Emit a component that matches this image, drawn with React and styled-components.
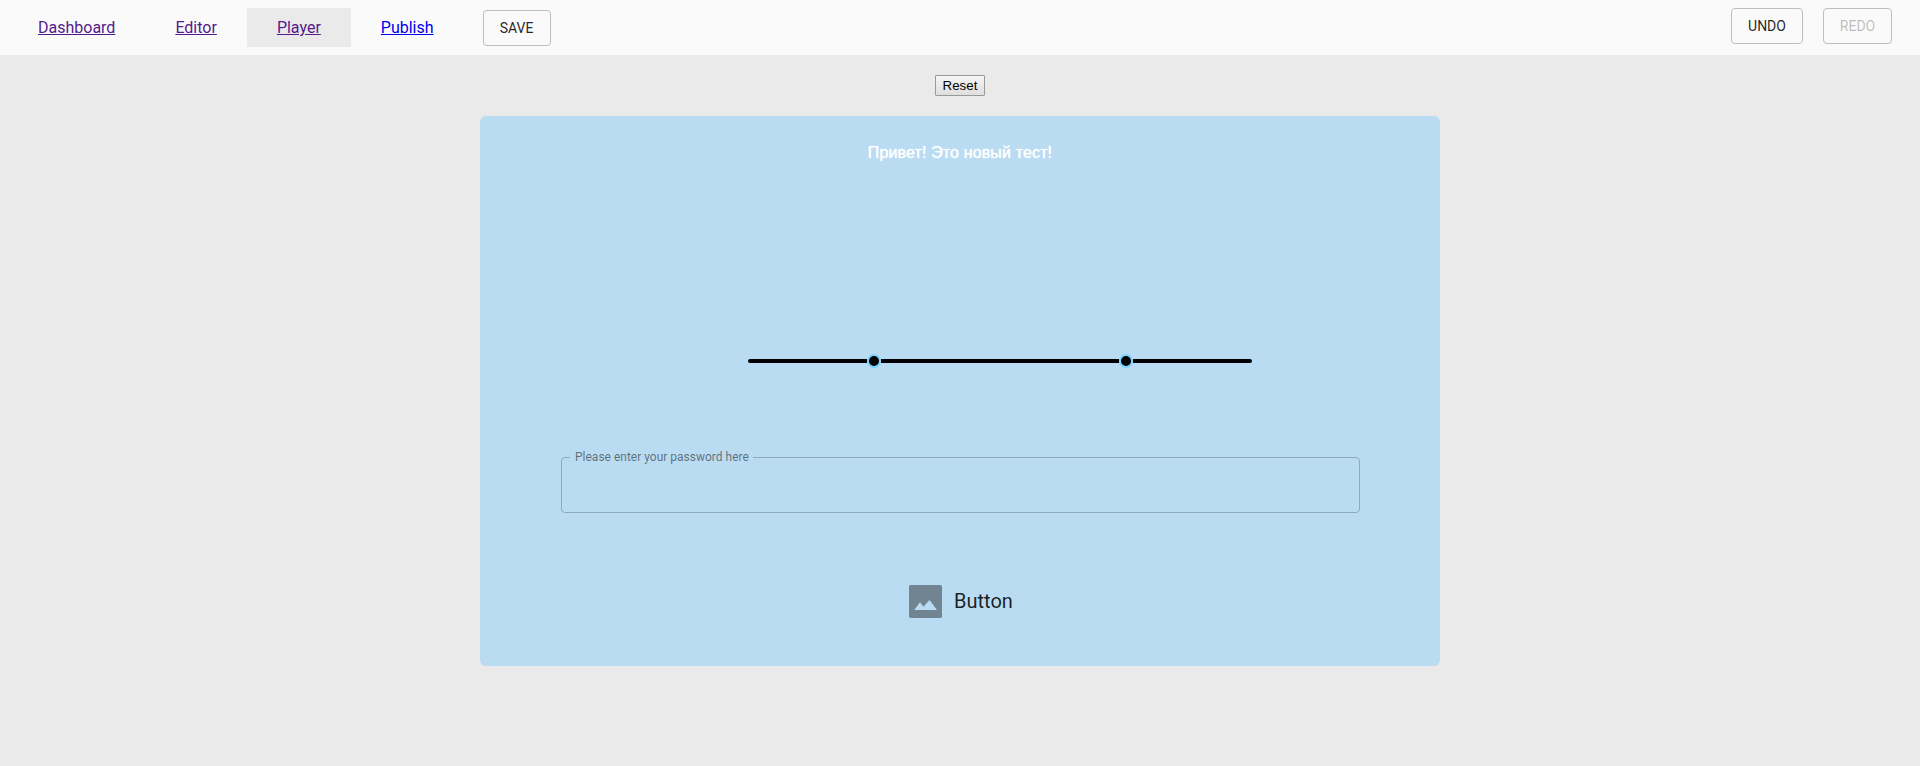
import React from 'react';
import styled, { createGlobalStyle } from 'styled-components';

const GlobalStyle = createGlobalStyle`
  *, *::before, *::after { box-sizing: border-box; }
  body {
    margin: 0;
    background: #eaeaea;
    font-family: Roboto, sans-serif;
    color: rgba(0, 0, 0, 0.87);
  }
`;

const Page = styled.div`
  display: flex;
  flex-direction: column;
  align-items: center;
  min-height: 766px;
`;

const Header = styled.header`
  display: flex;
  align-self: stretch;
  align-items: flex-start;
  justify-content: space-between;
  height: 55px;
  padding: 8px 28px 0 8px;
  background: #fafafa;
`;

const Nav = styled.nav`
  display: flex;
`;

const Tab = styled.div`
  height: 39px;
  padding: 0 30px;
  line-height: 39px;
  font-size: 16px;
  background: ${(p) => (p.$active ? '#eaeaea' : 'transparent')};
`;

const TabLink = styled.a`
  color: ${(p) => (p.$visited ? '#551a8b' : '#0000ee')};
  text-decoration: underline;
`;

const OutlinedButton = styled.button`
  width: ${(p) => p.$width}px;
  height: 36px;
  margin: ${(p) => p.$margin || '0'};
  padding: 0;
  border: 1px solid #bebebe;
  border-radius: 4px;
  background: transparent;
  color: ${(p) => (p.disabled ? 'rgba(0, 0, 0, 0.26)' : 'rgba(0, 0, 0, 0.87)')};
  font: 400 14px/24px Roboto, sans-serif;
`;

const History = styled.div`
  display: flex;
  gap: 20px;
`;

const ResetButton = styled.button`
  width: 50px;
  height: 21px;
  margin: 20px 0;
  padding: 0;
  border: 1px solid #999;
  border-radius: 1px;
  background: linear-gradient(#f6f6f6, #dedede);
  color: #000;
  font: 13.333px/17px 'Liberation Sans', Arial, sans-serif;
`;

const Card = styled.main`
  display: flex;
  flex-direction: column;
  align-items: center;
  width: 960px;
  height: 550px;
  padding-top: 28px;
  border-radius: 6px;
  background: #badcf2;
`;

const Title = styled.div`
  height: 18px;
  color: #fff;
  font: 16px/18px 'Liberation Sans', Arial, sans-serif;
  letter-spacing: 0.14px;
  text-shadow: 0 0 1px #fff;
`;

const Slider = styled.div`
  display: flex;
  align-items: center;
  width: 504px;
  height: 14px;
  margin: 192px 0 0 80px;
`;

const Track = styled.div`
  flex: ${(p) => p.$grow} 0 0;
  height: 4px;
  background: #000;
  border-radius: ${(p) => p.$radius || '0'};
`;

const Handle = styled.div`
  width: 14px;
  height: 14px;
  border: 2px solid #7fd3fb;
  border-radius: 50%;
  background: #000;
`;

const Field = styled.fieldset`
  width: 799px;
  height: 62px;
  margin: 83px 0 0 1px;
  padding: 0 8px;
  border: 1px solid #8faabc;
  border-radius: 4px;
`;

const FieldLabel = styled.legend`
  height: 13px;
  padding: 0 4px 0 5px;
  color: rgba(0, 0, 0, 0.5);
  font-size: 12px;
  line-height: 13px;
`;

const ImageButton = styled.div`
  display: flex;
  align-items: center;
  gap: 12px;
  height: 33px;
  margin: 72px 0 0 2px;
  font-size: 20px;
  line-height: 33px;
`;

const PictureIcon = () => (
  <svg width="33" height="33" viewBox="0 0 33 33">
    <rect width="33" height="33" rx="1.8" fill="#708591" />
    <path d="M5.2 25 11 17.2 14.5 21.7 20.5 15 28 25Z" fill="#badcf2" />
  </svg>
);

export default function App() {
  return (
    <>
      <GlobalStyle />
      <Page>
        <Header>
          <Nav>
            <Tab><TabLink href="#dashboard" $visited>Dashboard</TabLink></Tab>
            <Tab><TabLink href="#editor" $visited>Editor</TabLink></Tab>
            <Tab $active><TabLink href="#player" $visited>Player</TabLink></Tab>
            <Tab><TabLink href="#publish">Publish</TabLink></Tab>
            <OutlinedButton $width={68} $margin="2px 0 0 19px">SAVE</OutlinedButton>
          </Nav>
          <History>
            <OutlinedButton $width={72}>UNDO</OutlinedButton>
            <OutlinedButton $width={69} disabled>REDO</OutlinedButton>
          </History>
        </Header>
        <ResetButton>Reset</ResetButton>
        <Card>
          <Title>Привет! Это новый тест!</Title>
          <Slider>
            <Track $grow={119} $radius="2px 0 0 2px" />
            <Handle />
            <Track $grow={238} />
            <Handle />
            <Track $grow={119} $radius="0 2px 2px 0" />
          </Slider>
          <Field>
            <FieldLabel>Please enter your password here</FieldLabel>
          </Field>
          <ImageButton>
            <PictureIcon />
            Button
          </ImageButton>
        </Card>
      </Page>
    </>
  );
}
